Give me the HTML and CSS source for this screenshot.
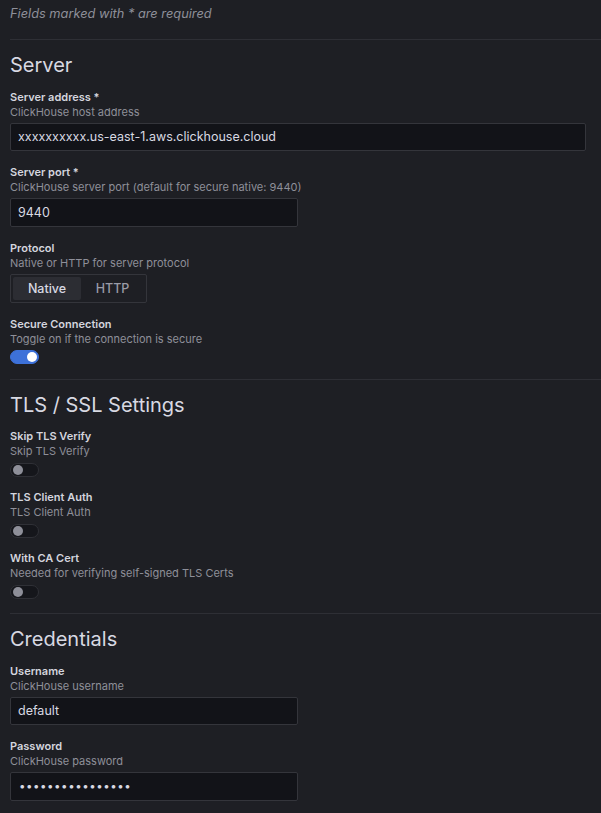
FILE: index.html
```html
<!DOCTYPE html>
<html lang="en">
<head>
<meta charset="utf-8">
<title>ClickHouse data source settings</title>
<link rel="stylesheet" href="styles.css">
</head>
<body>
<div class="page">
  <p class="note">Fields marked with * are required</p>
  <div class="divider divider-top"></div>

  <section class="section">
    <h3 class="heading">Server</h3>
    <div class="field">
      <div class="label">Server address *</div>
      <div class="desc">ClickHouse host address</div>
      <input class="input input-wide" type="text" value="xxxxxxxxxx.us-east-1.aws.clickhouse.cloud">
    </div>
    <div class="field">
      <div class="label">Server port *</div>
      <div class="desc">ClickHouse server port (default for secure native: 9440)</div>
      <input class="input input-half" type="text" value="9440">
    </div>
    <div class="field">
      <div class="label">Protocol</div>
      <div class="desc">Native or HTTP for server protocol</div>
      <div class="radio-group">
        <span class="radio radio-active">Native</span>
        <span class="radio radio-http">HTTP</span>
      </div>
    </div>
    <div class="field field-toggle">
      <div class="label">Secure Connection</div>
      <div class="desc">Toggle on if the connection is secure</div>
      <span class="switch switch-on"><span class="knob"></span></span>
    </div>
  </section>
  <div class="divider"></div>

  <section class="section">
    <h3 class="heading">TLS / SSL Settings</h3>
    <div class="field field-toggle">
      <div class="label">Skip TLS Verify</div>
      <div class="desc">Skip TLS Verify</div>
      <span class="switch"><span class="knob"></span></span>
    </div>
    <div class="field field-toggle">
      <div class="label">TLS Client Auth</div>
      <div class="desc">TLS Client Auth</div>
      <span class="switch"><span class="knob"></span></span>
    </div>
    <div class="field field-toggle">
      <div class="label">With CA Cert</div>
      <div class="desc">Needed for verifying self-signed TLS Certs</div>
      <span class="switch"><span class="knob"></span></span>
    </div>
  </section>
  <div class="divider"></div>

  <section class="section">
    <h3 class="heading">Credentials</h3>
    <div class="field">
      <div class="label">Username</div>
      <div class="desc">ClickHouse username</div>
      <input class="input input-half" type="text" value="default">
    </div>
    <div class="field">
      <div class="label">Password</div>
      <div class="desc">ClickHouse password</div>
      <div class="input input-half password">••••••••••••••••</div>
    </div>
  </section>
</div>
</body>
</html>
```

FILE: styles.css
```css
html, body {
  margin: 0;
  padding: 0;
  background: #1e1f24;
}

body {
  font-family: Inter, "Noto Sans", sans-serif;
  color: #ccccdc;
  overflow: hidden;
}

.page {
  padding: 6px 15px 0 10px;
}

.note {
  margin: 0;
  font-size: 12.8px;
  line-height: 16px;
  font-style: italic;
  color: #8e8f99;
}

.divider {
  height: 1px;
  background: #2e2f35;
  margin: 1px -15px 0 0;
}

.divider-top {
  margin-top: 17px;
}

.section {
  display: flex;
  flex-direction: column;
}

.heading {
  margin: 13px 0 11.5px;
  font-size: 20px;
  line-height: 25px;
  font-weight: 400;
  color: #d8d9e2;
}

.field {
  display: flex;
  flex-direction: column;
  align-items: flex-start;
  margin-bottom: 14px;
}

.field-toggle {
  margin-bottom: 13.5px;
}

.label {
  font-size: 11px;
  line-height: 15px;
  font-weight: 600;
  color: #d4d5de;
}

.desc {
  font-size: 11px;
  line-height: 15px;
  color: #8e8f99;
}

.input {
  box-sizing: border-box;
  height: 28.5px;
  margin-top: 3px;
  padding: 0 7px;
  background: #121318;
  border: 1px solid #34353b;
  border-radius: 2px;
  color: #d8d9e2;
  font-family: Inter, "Noto Sans", sans-serif;
  font-size: 12.5px;
  outline: none;
}

.input-wide {
  width: 576px;
}

.input-half {
  width: 288px;
}

.password {
  display: flex;
  align-items: center;
  padding-left: 8px;
  letter-spacing: 0.55px;
  font-size: 11.5px;
}

.radio-group {
  display: flex;
  box-sizing: border-box;
  height: 29px;
  margin-top: 3px;
  padding: 2px;
  border: 1px solid #34353b;
  border-radius: 2px;
}

.radio {
  display: flex;
  align-items: center;
  justify-content: center;
  width: 68px;
  border-radius: 2px;
  font-size: 12.5px;
  font-weight: 500;
  color: #9a9ba6;
}

.radio-http {
  width: 63px;
}

.radio-active {
  background: #2c2d33;
  color: #d8d9e2;
}

.switch {
  position: relative;
  box-sizing: border-box;
  display: block;
  width: 29px;
  height: 14px;
  margin-top: 3.5px;
  border-radius: 7px;
  background: #15161b;
  border: 1px solid #2f3036;
}

.knob {
  position: absolute;
  top: 1px;
  left: 2px;
  width: 10px;
  height: 10px;
  border-radius: 50%;
  background: #8e8f99;
}

.switch-on {
  background: #3d71d9;
  border-color: #3d71d9;
}

.switch-on .knob {
  left: auto;
  right: 1px;
  background: #ffffff;
}
```
